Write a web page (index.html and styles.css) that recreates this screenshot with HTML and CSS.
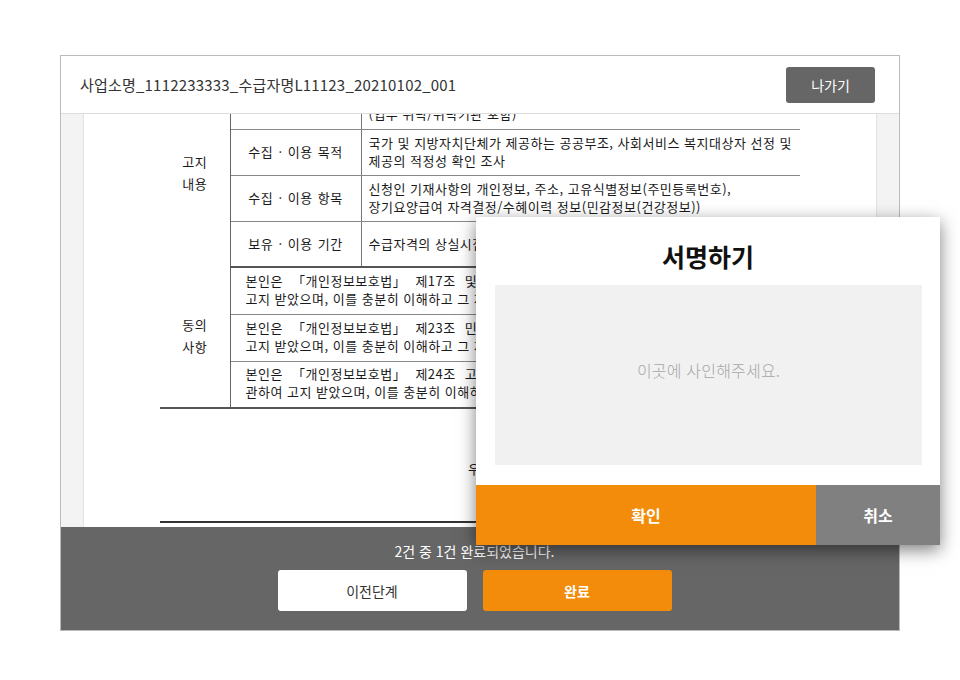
FILE: index.html
```html
<!DOCTYPE html>
<html lang="ko">
<head>
    <meta charset="UTF-8">
    <meta name="viewport" content="width=device-width, initial-scale=1.0">
    <title>서명하기</title>
    <link rel="stylesheet" href="styles.css">
</head>
<body>
    <div class="viewer">
        <header class="viewer-head">
            <h1 class="doc-title">사업소명_1112233333_수급자명L11123_20210102_001</h1>
            <button class="btn-exit" type="button">나가기</button>
        </header>

        <div class="doc-area">
            <div class="doc-page">
                <div class="doc-scroll">
                    <table class="doc-table">
                        <colgroup>
                            <col class="col-head">
                            <col class="col-label">
                            <col class="col-body">
                        </colgroup>
                        <tr class="row-first">
                            <td class="cell-head" rowspan="4">고지<br>내용</td>
                            <td class="cell-label"></td>
                            <td class="cell-body">
                                <div class="line">(업무 위탁/위탁기관 포함)</div>
                            </td>
                        </tr>
                        <tr>
                            <td class="cell-label">수집 · 이용 목적</td>
                            <td class="cell-body">
                                <div class="line">국가 및 지방자치단체가 제공하는 공공부조, 사회서비스 복지대상자 선정 및</div>
                                <div class="line">제공의 적정성 확인 조사</div>
                            </td>
                        </tr>
                        <tr>
                            <td class="cell-label">수집 · 이용 항목</td>
                            <td class="cell-body">
                                <div class="line">신청인 기재사항의 개인정보, 주소, 고유식별정보(주민등록번호),</div>
                                <div class="line">장기요양급여 자격결정/수혜이력 정보(민감정보(건강정보))</div>
                            </td>
                        </tr>
                        <tr class="row-last">
                            <td class="cell-label">보유 · 이용 기간</td>
                            <td class="cell-body">
                                <div class="line">수급자격의 상실시점</div>
                            </td>
                        </tr>
                        <tr class="row-agree row-section">
                            <td class="cell-head" rowspan="3">동의<br>사항</td>
                            <td class="cell-agree" colspan="2">
                                <div class="line wide">본인은 「개인정보보호법」 제17조 및 제</div>
                                <div class="line">고지 받았으며, 이를 충분히 이해하고 그 처</div>
                            </td>
                        </tr>
                        <tr class="row-agree">
                            <td class="cell-agree" colspan="2">
                                <div class="line wide">본인은 「개인정보보호법」 제23조 민감</div>
                                <div class="line">고지 받았으며, 이를 충분히 이해하고 그 처</div>
                            </td>
                        </tr>
                        <tr class="row-agree row-end">
                            <td class="cell-agree" colspan="2">
                                <div class="line wide">본인은 「개인정보보호법」 제24조 고유</div>
                                <div class="line">관하여 고지 받았으며, 이를 충분히 이해하</div>
                            </td>
                        </tr>
                    </table>
                    <div class="doc-sign">
                        <p class="doc-sign-text">우</p>
                    </div>
                </div>
            </div>
        </div>

        <footer class="viewer-foot">
            <p class="progress">2건 중 1건 완료되었습니다.</p>
            <div class="foot-buttons">
                <button class="btn btn-prev" type="button">이전단계</button>
                <button class="btn btn-done" type="button">완료</button>
            </div>
        </footer>
    </div>

    <div class="sign-modal">
        <h2 class="sign-title">서명하기</h2>
        <div class="sign-pad">이곳에 사인해주세요.</div>
        <div class="sign-actions">
            <button class="sign-btn sign-ok" type="button">확인</button>
            <button class="sign-btn sign-cancel" type="button">취소</button>
        </div>
    </div>
</body>
</html>
```

FILE: styles.css
```css
* {
    margin: 0;
    padding: 0;
    box-sizing: border-box;
}

body {
    background-color: #fff;
    font-family: "Noto Sans CJK KR", "Noto Sans", sans-serif;
    color: #333;
}

button {
    font-family: inherit;
    border: none;
    cursor: pointer;
}

/* viewer frame */
.viewer {
    width: 840px;
    height: 576px;
    margin: 55px 0 0 60px;
    border: 1px solid #bbb;
    display: flex;
    flex-direction: column;
}

.viewer-head {
    height: 58px;
    flex-shrink: 0;
    display: flex;
    align-items: center;
    justify-content: space-between;
    padding: 0 24px 0 19px;
    border-bottom: 1px solid #ddd;
}

.doc-title {
    font-size: 15px;
    font-weight: 400;
    letter-spacing: 0.2px;
    color: #333;
}

.btn-exit {
    width: 89px;
    height: 36px;
    border-radius: 3px;
    background-color: #666;
    color: #fff;
    font-size: 14px;
}

/* document */
.doc-area {
    flex: 1;
    overflow: hidden;
    background-color: #f3f3f3;
    padding: 0 22px;
}

.doc-page {
    height: 100%;
    background-color: #fff;
    border-left: 1px solid #e2e2e2;
    border-right: 1px solid #e2e2e2;
    overflow: hidden;
}

.doc-scroll {
    width: 640px;
    margin: -34px auto 0;
    font-size: 13px;
    letter-spacing: 0.5px;
    color: #1a1a1a;
}

.doc-table {
    width: 640px;
    border-collapse: collapse;
    table-layout: fixed;
}

.col-head {
    width: 70px;
}

.col-label {
    width: 131px;
}

.doc-table td {
    line-height: 18px;
    vertical-align: middle;
}

.cell-head {
    text-align: center;
    line-height: 22px !important;
    border-right: 1px solid #666;
    padding-bottom: 2px;
}

.cell-label {
    height: 46px;
    text-align: center;
    word-spacing: 1px;
    border-right: 1px solid #777;
    border-bottom: 1px solid #888;
}

.cell-body {
    padding: 0 0 0 7px;
    border-bottom: 1px solid #888;
}

.row-first .cell-label,
.row-first .cell-body {
    height: 49px;
    vertical-align: bottom;
    padding-bottom: 6px;
}

.row-last .cell-label,
.row-last .cell-body {
    border-bottom: 2px solid #555;
}

.line {
    white-space: nowrap;
    overflow: hidden;
}

.wide {
    word-spacing: 5px;
}

.cell-agree {
    height: 47px;
    padding: 0 0 2px 15px;
    border-bottom: 1px solid #888;
}

.row-section .cell-head {
    border-bottom: 2px solid #555;
}

.row-end .cell-agree {
    border-bottom: 2px solid #555;
}

.doc-sign {
    height: 114px;
    border-bottom: 2px solid #333;
    padding: 51px 0 0 308px;
}

.doc-sign-text {
    line-height: 18px;
    white-space: nowrap;
}

/* footer */
.viewer-foot {
    height: 103px;
    flex-shrink: 0;
    background-color: #666;
    padding: 15px 11px 0 0;
    text-align: center;
}

.progress {
    font-size: 14px;
    line-height: 18px;
    color: #fff;
    margin-bottom: 10px;
}

.foot-buttons {
    display: flex;
    justify-content: center;
    gap: 16px;
}

.btn {
    width: 189px;
    height: 41px;
    border-radius: 3px;
    font-size: 14px;
}

.btn-prev {
    background-color: #fff;
    color: #333;
}

.btn-done {
    background-color: #f28c0a;
    color: #fff;
    font-weight: 700;
}

/* sign modal */
.sign-modal {
    position: absolute;
    left: 476px;
    top: 217px;
    width: 464px;
    height: 328px;
    background-color: #fff;
    box-shadow: 0 5px 16px rgba(0, 0, 0, 0.5);
    display: flex;
    flex-direction: column;
}

.sign-title {
    height: 68px;
    padding-top: 10px;
    line-height: 58px;
    text-align: center;
    font-size: 25px;
    font-weight: 700;
    color: #111;
}

.sign-pad {
    height: 180px;
    margin: 0 18px 20px 19px;
    padding-top: 73px;
    background-color: #f1f1f1;
    text-align: center;
    font-size: 16px;
    line-height: 24px;
    font-weight: 300;
    letter-spacing: 0.2px;
    color: #a6a6a6;
}

.sign-actions {
    display: flex;
    height: 60px;
}

.sign-btn {
    color: #fff;
    font-size: 16px;
    font-weight: 700;
}

.sign-ok {
    width: 340px;
    background-color: #f28c0a;
}

.sign-cancel {
    flex: 1;
    background-color: #808080;
}
```
